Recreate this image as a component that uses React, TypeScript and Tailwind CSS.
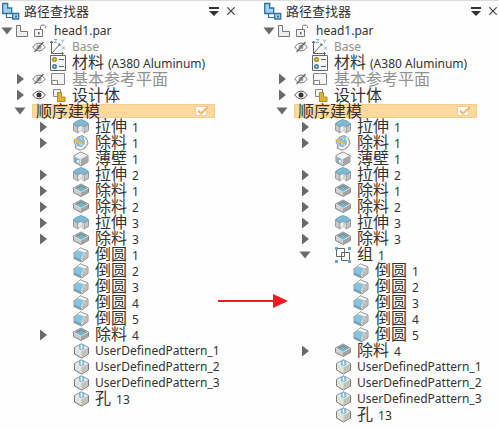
import type { ReactNode } from 'react'

type IconName =
  | 'extrude'
  | 'revolvedCut'
  | 'thinWall'
  | 'cut'
  | 'round'
  | 'pattern'
  | 'group'

type Feature = {
  icon: IconName
  name: string
  index?: string
  toggle?: 'open' | 'closed'
  nested?: boolean
}

const leading: Feature[] = [
  { icon: 'extrude', name: '拉伸', index: '1', toggle: 'closed' },
  { icon: 'revolvedCut', name: '除料', index: '1', toggle: 'closed' },
  { icon: 'thinWall', name: '薄壁', index: '1' },
  { icon: 'extrude', name: '拉伸', index: '2', toggle: 'closed' },
  { icon: 'cut', name: '除料', index: '1', toggle: 'closed' },
  { icon: 'cut', name: '除料', index: '2', toggle: 'closed' },
  { icon: 'extrude', name: '拉伸', index: '3', toggle: 'closed' },
  { icon: 'cut', name: '除料', index: '3', toggle: 'closed' }
]

const rounds: Feature[] = ['1', '2', '3', '4', '5'].map((index) => ({
  icon: 'round',
  name: '倒圆',
  index
}))

const trailing: Feature[] = [
  { icon: 'cut', name: '除料', index: '4', toggle: 'closed' },
  { icon: 'pattern', name: 'UserDefinedPattern_1' },
  { icon: 'pattern', name: 'UserDefinedPattern_2' },
  { icon: 'pattern', name: 'UserDefinedPattern_3' },
  { icon: 'pattern', name: '孔', index: '13' }
]

const flat = [...leading, ...rounds, ...trailing]

const grouped: Feature[] = [
  ...leading,
  { icon: 'group', name: '组', index: '1', toggle: 'open' },
  ...rounds.map((r) => ({ ...r, nested: true })),
  ...trailing
]

function Svg({ children, className = 'w-4 h-4' }: { children: ReactNode; className?: string }) {
  return (
    <svg viewBox="0 0 16 16" className={`${className} shrink-0`} fill="none" aria-hidden="true">
      {children}
    </svg>
  )
}

function FeatureIcon({ name }: { name: IconName }) {
  switch (name) {
    case 'extrude':
      return (
        <Svg>
          <path d="M.5 5v6.500L5 14V8zM15.500 5v6.500L11 14V8z" fill="#c6c6c6" stroke="#8b8b8b" strokeWidth=".8" />
          <path d="M5 8l3-2 3 2v6l-3-2.500L5 14z" fill="#f0f0f0" stroke="#9a9a9a" strokeWidth=".6" />
          <path d="M8 6v5.500L11 14V8z" fill="#d4d4d4" />
          <path d="M.5 4.500 4 2l4-1.500L12 2l3.500 2.500L11 7.800 8 6 5 7.800z" fill="#7fb9d3" stroke="#6599b0" strokeWidth=".8" />
        </Svg>
      )
    case 'revolvedCut':
      return (
        <Svg>
          <path d="M4 2.500 9 .5l4.500 3 1.500 5-3 4.500-5 2.300L2 13l1-2.500L1 7z" fill="#d8d8d8" stroke="#858585" strokeWidth=".9" />
          <path d="m5 2.800 4-1.500L11.500 4 12 8.500 9 12l-4.500-1-2-3.500z" fill="#82bdd9" />
          <path d="M11 2.500 13 6.500 12.500 10 8.500 13.500 4 12.500" stroke="#fff" strokeWidth="1.300" />
          <path d="M7 2 9 5M6 8.500l4 2" stroke="#d5ebf5" />
          <path d="m.5 4.500 5 2.500 5 2" stroke="#f3bf30" strokeWidth="1.700" />
        </Svg>
      )
    case 'thinWall':
      return (
        <Svg>
          <path d="M8 1 15 4.500v6.500L8 15 1 11V4.500z" fill="#dcdcdc" stroke="#7d7d7d" strokeWidth=".9" />
          <path d="M8 1.500 14.500 4.700 8 8 1.500 4.700z" fill="#f4f4f4" />
          <path d="M8 8v6.500l6.500-3.700V4.700z" fill="#a6a6a6" />
          <path d="m2 6.200 4.500 2.300v4.800L2 10.800z" fill="#6faccb" />
          <path d="m3.800 8.500 2.200 1.100v2.600l-2.200-1.200z" fill="#f4fafc" />
        </Svg>
      )
    case 'cut':
      return (
        <Svg>
          <path d="M8 1 15.500 5v4.500L8 13.500.5 9.500V5z" fill="#cecece" stroke="#7a7a7a" strokeWidth=".9" />
          <path d="M8 9v4l7-3.700V5.300z" fill="#a3a3a3" />
          <path d="M8 1.500 15 5.100 8 9 1 5.100z" fill="#b2b6b8" />
          <path d="M8 2.300 13.500 5.100 8 8.200 2.500 5.100z" fill="#6c8592" />
          <path d="M8 3.500 12.500 5.600 8 8.200 3.500 5.600z" fill="#75b4d1" />
          <path d="M1 5.300 8 9.100l7-3.800" stroke="#e8e8e8" strokeWidth=".7" />
        </Svg>
      )
    case 'round':
      return (
        <Svg>
          <path d="M7.500.8 15 4v6.500L8.500 15 1 11.500V6z" fill="#c9c9c9" stroke="#888" strokeWidth=".9" />
          <path d="M7.500 1.300 14.300 4.200 11.500 5.600 4.500 3.200z" fill="#fafafa" />
          <path d="M4.500 3.200 11.500 5.600Q8.500 8 8.500 13L1.200 9.800Q1.500 5.500 4.500 3.200z" fill="#87c3df" />
          <path d="m1.300 9.800 7.200 3.200v1.500l-7.200-3.200z" fill="#5f9db9" />
          <path d="M11.500 5.600Q8.800 8 8.800 13.800l5.700-3.800V4.300z" fill="#bdbdbd" />
          <path d="M11.500 5.600Q8.600 8 8.600 14" stroke="#eee" strokeWidth=".7" />
        </Svg>
      )
    case 'pattern':
      return (
        <Svg>
          <path d="M8.500.8 15.500 4.500v6.500l-7 4-7-4V4.500z" fill="#e2e2dd" stroke="#7b7b7b" strokeWidth="1" />
          <path d="M8.500 8.200v6.300l6.500-3.800V4.800z" fill="#c2c2bc" />
          <path d="m8.500 1.300 6.400 3.300-6.400 3.500-6.400-3.500z" fill="#efefec" />
          <path d="M5.800 2q2.700-1.500 5.400 0v4q-2.700 1.800-5.400 0z" fill="#79bbdc" />
          <path d="M8.500 2v3.800" stroke="#fff" strokeWidth="1.500" />
        </Svg>
      )
    case 'group':
      return (
        <Svg>
          <path d="M1.500 1.500h8v8h-8zM6.500 5.500h8v8h-8z" stroke="#666" />
          <path d="M0 0h3v3H0zM13 0h3v3h-3zM0 13h3v3H0zM13 13h3v3h-3z" fill="#68aacb" />
        </Svg>
      )
  }
}

function Toggle({ open, label }: { open: boolean; label: string }) {
  return (
    <button type="button" aria-label={label} aria-expanded={open} className="w-3 h-4 shrink-0 flex items-center justify-center">
      <svg viewBox="0 0 12 12" className="w-3 h-3" fill="#6a6a6a" aria-hidden="true">
        {open ? <path d="M.5 2.500h11L6 9.500z" /> : <path d="M3 .5v11L10 6z" />}
      </svg>
    </button>
  )
}

function Eye({ hidden }: { hidden?: boolean }) {
  return (
    <button type="button" aria-label={hidden ? '显示' : '隐藏'} className="w-[14px] h-4 shrink-0 flex items-center">
      <svg viewBox="0 0 14 12" className="w-[14px] h-3" fill="none" aria-hidden="true">
        <path d="M.7 6Q3.500 2 7 2t6.300 4Q10.500 10 7 10T.7 6z" stroke={hidden ? '#777' : '#555'} />
        <circle cx="7" cy="6" r="2.500" fill={hidden ? '#aaa' : '#333'} />
        {hidden && <path d="M2.500 11 11.500 1" stroke="#666" strokeWidth="1.200" />}
      </svg>
    </button>
  )
}

function Label({ name, index }: { name: string; index?: string }) {
  const wide = /[^\x00-\x7f]/.test(name)
  return (
    <span className="flex items-baseline whitespace-nowrap">
      <span className={wide ? 'text-[16px] leading-4' : 'text-[12px] leading-4'}>{name}</span>
      {index && <span className="ml-[5px] text-[12px] leading-4">{index}</span>}
    </span>
  )
}

function FeatureRow({ feature }: { feature: Feature }) {
  return (
    <li className={`flex h-4 items-center ${feature.nested ? 'pl-[91px]' : 'pl-[37px]'}`}>
      {!feature.nested && (
        <span className="flex w-9 shrink-0">
          {feature.toggle && <Toggle open={feature.toggle === 'open'} label={feature.name} />}
        </span>
      )}
      <FeatureIcon name={feature.icon} />
      <span className="ml-[6px] flex">
        <Label name={feature.name} index={feature.index} />
      </span>
    </li>
  )
}

function PathFinder({ features, id }: { features: Feature[]; id: string }) {
  return (
    <section className="min-w-0 flex-1" aria-label="路径查找器">
      <header className="flex h-[22px] items-center pb-[2px] pl-[2px] pr-[2px]">
        <svg viewBox="0 0 18 18" className="h-[18px] w-[18px] shrink-0" fill="none" aria-hidden="true">
          <path d="M.7 1.500h5v4.500h4v5.500h-9z" fill="#9fd0f0" stroke="#32719d" strokeWidth="1.300" />
          <path d="M4.500 12v3.500H11" stroke="#32719d" strokeWidth="1.200" />
          <path d="M10.700 11.500h6v5.500h-6z" fill="#a6d6f3" stroke="#32719d" strokeWidth="1.300" />
          <path d="M13 13.500h2v2h-2z" fill="#32719d" />
        </svg>
        <h2 className="ml-1 flex-1 text-[13px] leading-4">路径查找器</h2>
        <button type="button" aria-label="选项" className="mr-2">
          <svg viewBox="0 0 10 10" className="h-[10px] w-[10px]" fill="#333" aria-hidden="true">
            <path d="M0 1h10v2H0zM0 5h10L5 10z" />
          </svg>
        </button>
        <button type="button" aria-label="关闭">
          <svg viewBox="0 0 8 8" className="h-2 w-2" stroke="#444" strokeWidth="1.200" aria-hidden="true">
            <path d="m.3.3 7.400 7.400M7.700.3.3 7.700" />
          </svg>
        </button>
      </header>

      <ul>
        <li className="flex h-4 items-center pl-[1px]">
          <Toggle open label="head1.par" />
          <svg viewBox="0 0 14 14" className="ml-[2px] h-[14px] w-[14px]" fill="none" aria-hidden="true">
            <path d="M1.500 1.500h4v6h7v5h-11z" fill="#eee" stroke="#777" />
          </svg>
          <svg viewBox="0 0 14 14" className="ml-[4px] h-[14px] w-[14px]" fill="none" aria-hidden="true">
            <path d="M1.500 5.500h8v7h-8z" fill="#f3f3f3" stroke="#777" />
            <path d="M7.500 5V2.500q0-1.500 2.500-1.500t2.500 1.500V4" stroke="#777" />
            <path d="M5 8h1.500v2.500H5z" fill="#666" />
          </svg>
          <span className="ml-[7px] flex">
            <Label name="head1.par" />
          </span>
        </li>
        <li className="flex h-4 items-center pl-8">
          <Eye hidden />
          <Svg className="ml-[4px] h-4 w-4">
            <path d="M1.500 2v12.500H13M1.500 14.500 10 5M0 4l1.500-2L3 4M8 5h2v2M12 13l1.500 1.500L12 16" stroke="#666" />
            <path d="M4 .5h3L4 3.500h3M11 .5l1.500 2 1.500-2M12.500 2.500v1.500M12 7.500l3 3M15 7.500l-3 3" stroke="#7ab4d0" />
          </Svg>
          <span className="ml-[6px] flex text-[#919191]">
            <Label name="Base" />
          </span>
        </li>
        <li className="flex h-4 items-center pl-[50px]">
          <Svg>
            <path d="M.5.5h15v15H.5z" fill="#f6f6f6" stroke="#666" />
            <circle cx="4.500" cy="4.500" r="1.700" fill="#f2df91" stroke="#b08a12" strokeWidth="1.600" />
            <circle cx="4.500" cy="11.500" r="1.700" fill="#c9e6f3" stroke="#437d9d" strokeWidth="1.600" />
            <path d="M9 4.500h5M9 11.500h5" stroke="#666" />
          </Svg>
          <span className="ml-[6px] flex items-baseline whitespace-nowrap">
            <span className="text-[16px] leading-4">材料</span>
            <span className="ml-1 text-[12px] leading-4">(A380 Aluminum)</span>
          </span>
        </li>
        <li className="flex h-4 items-center pl-[14px]">
          <Toggle open={false} label="基本参考平面" />
          <span className="ml-[6px] flex">
            <Eye hidden />
          </span>
          <Svg className="ml-[4px] h-4 w-4">
            <path d="M1.500 2.500h13v11h-13z" fill="#f4f4f4" stroke="#888" />
            <path d="M2 9.500h5.500v4H2z" fill="#fff" stroke="#888" />
          </Svg>
          <span className="ml-[6px] flex text-[#919191]">
            <Label name="基本参考平面" />
          </span>
        </li>
        <li className="flex h-4 items-center pl-[14px]">
          <Toggle open={false} label="设计体" />
          <span className="ml-[6px] flex">
            <Eye />
          </span>
          <Svg className="ml-[4px] h-4 w-4">
            <path d="M3.500 2.500h7v7h-7z" fill="#f4f4f4" stroke="#888" />
            <path d="M7.500 5.500h4v4.500h3.500v4.500H7.500z" fill="#dcb238" stroke="#b18a22" />
          </Svg>
          <span className="ml-[6px] flex">
            <Label name="设计体" />
          </span>
        </li>
        <li className="flex h-4 items-center pl-[14px]">
          <Toggle open label="顺序建模" />
          <div className="ml-[6px] mr-[22px] flex h-[14px] flex-1 items-center border border-[#f6cd8d] bg-[#fed99d] pl-[3px] pr-[5px]">
            <label htmlFor={id} className="flex flex-1">
              <Label name="顺序建模" />
            </label>
            <span className="grid h-3 w-[14px]">
              <input
                id={id}
                type="checkbox"
                defaultChecked
                className="col-start-1 row-start-1 h-[10px] w-3 appearance-none self-center border border-[#e8cfa8] bg-[#fffaf2]"
              />
              <svg viewBox="0 0 14 12" className="pointer-events-none col-start-1 row-start-1 h-3 w-[14px]" fill="none" aria-hidden="true">
                <path d="m3 5.500 3 3 7-6.500" stroke="#efbd7c" strokeWidth="2" />
              </svg>
            </span>
          </div>
        </li>
        {features.map((feature, i) => (
          <FeatureRow key={i} feature={feature} />
        ))}
      </ul>
    </section>
  )
}

export default function App() {
  return (
    <main className="relative flex min-h-screen gap-[25px] border-t border-[#dcdcdc] bg-[#fefefe] font-['Noto_Sans','Noto_Sans_CJK_SC',sans-serif] text-[#333]">
      <PathFinder features={flat} id="ordered-before" />
      <PathFinder features={grouped} id="ordered-after" />
      <svg
        viewBox="0 0 70 16"
        className="pointer-events-none absolute left-1/2 top-[292px] ml-[-32px] h-4 w-[70px]"
        fill="#ed1c24"
        aria-hidden="true"
      >
        <path d="M0 7h56v2H0zM55 1l15 7-15 7z" />
      </svg>
    </main>
  )
}
